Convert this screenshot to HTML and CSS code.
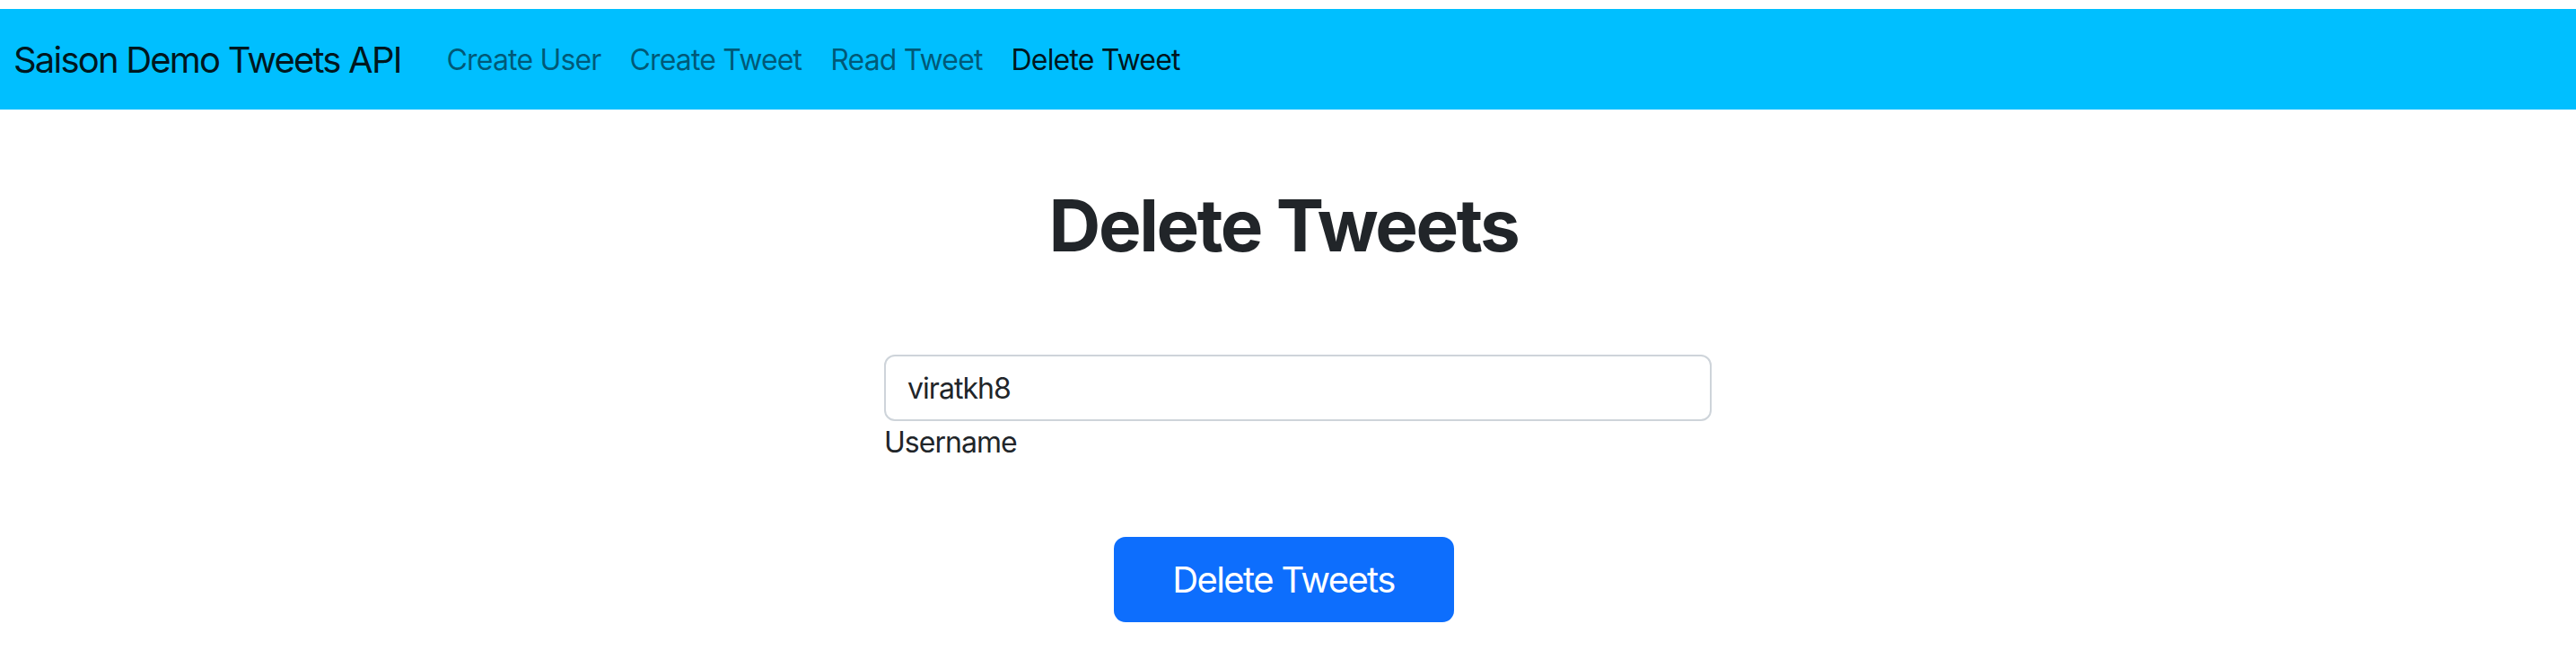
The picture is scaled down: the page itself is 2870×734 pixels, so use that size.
FILE: index.html
```html
<!DOCTYPE html>
<html lang="en">
<head>
<meta charset="utf-8">
<title>Saison Demo Tweets API</title>
<link rel="stylesheet" href="styles.css">
</head>
<body>
<nav class="navbar">
  <a class="brand" href="#">Saison Demo Tweets API</a>
  <ul class="nav-links">
    <li><a class="nav-link" href="#">Create User</a></li>
    <li><a class="nav-link" href="#">Create Tweet</a></li>
    <li><a class="nav-link" href="#">Read Tweet</a></li>
    <li><a class="nav-link active" href="#">Delete Tweet</a></li>
  </ul>
</nav>
<main class="page">
  <h1 class="title">Delete Tweets</h1>
  <form class="form">
    <div class="field">
      <input class="input" type="text" value="viratkh8">
      <label class="label">Username</label>
    </div>
    <div class="actions">
      <button class="btn" type="button">Delete Tweets</button>
    </div>
  </form>
</main>
</body>
</html>
```

FILE: styles.css
```css
* { box-sizing: border-box; }
html, body { margin: 0; padding: 0; background: #fff; }
body {
  font-family: Inter, "Liberation Sans", sans-serif;
  color: #212529;
  padding-top: 10px;
}
.navbar {
  height: 112px;
  background: #00bfff;
  display: flex;
  align-items: center;
  padding-left: 15px;
}
.brand {
  font-size: 40px;
  letter-spacing: -0.045em;
  color: rgba(0, 0, 0, 0.9);
  text-decoration: none;
  margin-right: 35px;
}
.nav-links {
  list-style: none;
  margin: 0;
  padding: 0;
  display: flex;
}
.nav-link {
  display: block;
  font-size: 32px;
  letter-spacing: -0.026em;
  padding: 0 16px;
  color: rgba(0, 0, 0, 0.55);
  text-decoration: none;
}
.nav-link.active { color: rgba(0, 0, 0, 0.9); }
.page { display: flex; flex-direction: column; align-items: center; }
.title {
  margin: 81px 0 0;
  font-size: 80px;
  line-height: 96px;
  font-weight: 700;
  letter-spacing: -0.03em;
  color: #212529;
  padding-right: 10px;
}
.form {
  display: flex;
  flex-direction: column;
  align-items: center;
  margin-top: 96px;
  padding-left: 22px;
}
.field { width: 922px; display: flex; flex-direction: column; }
.input {
  height: 74px;
  border: 2px solid #ced4da;
  border-radius: 12px;
  padding: 0 24px;
  font-family: Inter, "Liberation Sans", sans-serif;
  font-size: 32px;
  letter-spacing: -0.03em;
  color: #212529;
  outline: none;
}
.label { font-size: 32px; line-height: 48px; letter-spacing: -0.03em; color: #212529; }
.actions { margin-top: 81px; padding-right: 32px; }
.btn {
  width: 379px;
  height: 95px;
  background: #0d6efd;
  border: none;
  border-radius: 13px;
  color: #fff;
  font-family: Inter, "Liberation Sans", sans-serif;
  font-size: 40px;
  letter-spacing: -0.04em;
  padding: 0;
}
```
